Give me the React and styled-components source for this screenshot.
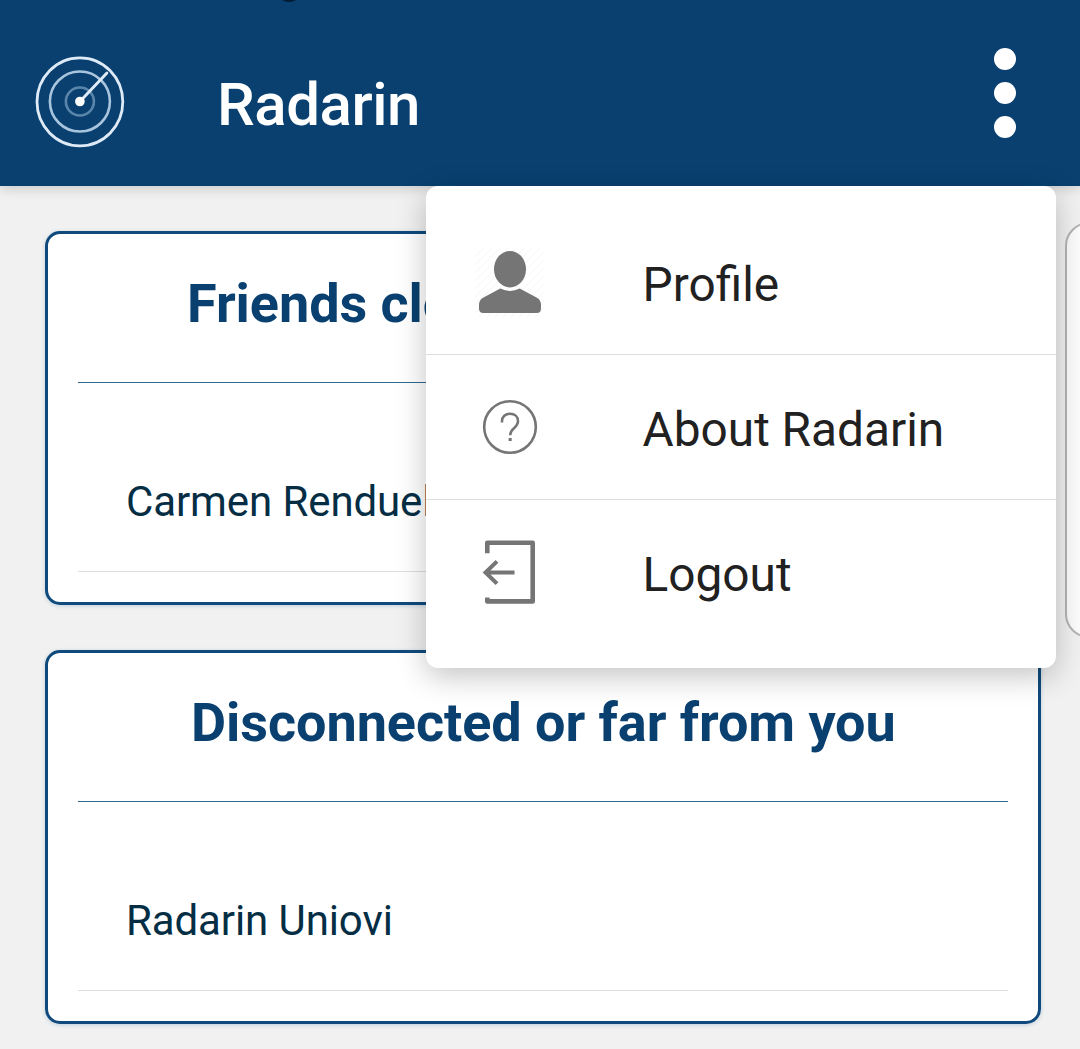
import React from "react";
import styled, { createGlobalStyle } from "styled-components";

const GlobalStyle = createGlobalStyle`
  * { box-sizing: border-box; }
  body {
    margin: 0;
    background: #f1f1f1;
    font-family: Roboto, sans-serif;
    overflow: hidden;
  }
`;

const Screen = styled.div`
  position: relative;
  width: 1080px;
  height: 1049px;
  overflow: hidden;
  background: #f1f1f1;
`;

const AppBar = styled.header`
  position: relative;
  display: flex;
  align-items: center;
  height: 186px;
  padding: 18px 64px 0 34px;
  background: #094070;
  box-shadow: 0 2px 12px rgba(0, 0, 0, 0.18);
`;

const CameraHole = styled.span`
  position: absolute;
  top: -24px;
  left: 276px;
  width: 26px;
  height: 26px;
  border-radius: 50%;
  background: #041c33;
`;

const AppTitle = styled.h1`
  flex: 1;
  margin: 5px 0 0 91px;
  color: #fff;
  font-size: 60px;
  line-height: 70px;
  font-weight: 500;
  letter-spacing: -0.45px;
`;

const MoreButton = styled.button`
  display: flex;
  flex-direction: column;
  gap: 11.5px;
  margin-top: -18px;
  padding: 0;
  border: 0;
  background: none;
`;

const Dot = styled.span`
  width: 22.5px;
  height: 22.5px;
  border-radius: 50%;
  background: #fff;
`;

const Pager = styled.main`
  display: flex;
  align-items: flex-start;
  gap: 24px;
  padding: 36px 0 0 45px;
`;

const Page = styled.section`
  display: flex;
  flex: none;
  flex-direction: column;
  gap: 45px;
  width: 996px;
  padding-top: 9px;
`;

const NextPage = styled.section`
  flex: none;
  width: 300px;
  height: 416px;
  border: 2px solid #b4b4b4;
  border-radius: 24px;
  background: #fcfcfc;
`;

const Card = styled.article`
  height: 374px;
  padding: 0 30px;
  border: 3px solid #104a7c;
  border-radius: 15px;
  background: #fff;
  box-shadow: 0 1px 4px rgba(20, 90, 150, 0.22);
`;

const CardTitle = styled.h2`
  height: 149px;
  margin: 0;
  padding: 38px 0 0 ${(p) => p.$indent}px;
  border-bottom: 1px solid #2e6a90;
  color: #094070;
  font-size: 54px;
  line-height: 64px;
  font-weight: 700;
  letter-spacing: -0.06px;
  white-space: nowrap;
`;

const Friend = styled.div`
  height: 189px;
  padding: 94px 48px 0;
  border-bottom: 1px solid #dedede;
  color: #052e45;
  font-size: 42px;
  line-height: 50px;
  letter-spacing: -0.1px;
`;

const Menu = styled.nav`
  position: absolute;
  top: 186px;
  left: 426px;
  width: 630px;
  height: 482px;
  padding: 24px 0;
  border-radius: 12px;
  background: #fff;
  box-shadow: 0 8px 30px rgba(0, 0, 0, 0.24);
`;

const MenuItem = styled.div`
  display: grid;
  grid-template-columns: 84px 1fr;
  column-gap: 90px;
  align-items: center;
  height: 145px;
  padding-left: 42px;
  border-bottom: ${(p) => (p.$last ? "0" : "1px solid #dedede")};
  color: #212121;
  font-size: 47.8px;
  line-height: 56px;
`;

const MenuLabel = styled.span`
  padding: 5px 0 0 0.5px;
`;

const MenuIcon = styled.svg`
  display: block;
  width: 84px;
  height: 84px;
  color: #757575;
`;

const RadarLogo = () => (
  <svg width="92" height="96" viewBox="0 0 92 96" fill="none" stroke="#deebf7">
    <ellipse cx="45.9" cy="47.8" rx="42.9" ry="44" strokeWidth="2.8" />
    <circle cx="45.9" cy="47.5" r="30" strokeWidth="2.6" stroke="#a9c5de" />
    <circle cx="45.9" cy="47.5" r="14" strokeWidth="2.6" stroke="#5b86ab" />
    <path d="M45.9 47.5 72.9 19" strokeWidth="2.9" strokeLinecap="round" />
    <circle cx="45.9" cy="47.5" r="4.8" fill="#fff" stroke="none" />
  </svg>
);

const ProfileIcon = () => (
  <MenuIcon viewBox="0 0 84 84" fill="currentColor">
    <defs>
      <pattern id="hatch" width="8" height="8" patternUnits="userSpaceOnUse">
        <path d="M-1 9 9 -1M-1 1 1 -1M7 9 9 7" stroke="#f8f8f8" strokeWidth="1.2" />
      </pattern>
    </defs>
    <rect x="7" y="7" width="70" height="70" fill="url(#hatch)" />
    <ellipse cx="42" cy="29.2" rx="16" ry="18.2" />
    <path d="M32.3 48.6Q42 53.4 51.7 48.6L68.5 57.4Q73 59.8 73 65V68.5Q73 73 68.5 73H15.5Q11 73 11 68.5V65Q11 59.8 15.5 57.4Z" />
  </MenuIcon>
);

const HelpIcon = () => (
  <MenuIcon viewBox="0 0 84 84" fill="none" stroke="currentColor">
    <circle cx="42" cy="42" r="25.8" strokeWidth="2.6" />
    <path d="M34 37.4V36C34 31.6 37.4 28.7 42 28.7S50 31.7 50 36.3C50 39.2 48.6 41.1 46 43.2C43.2 45.5 42.2 47.5 42.2 50.2" strokeWidth="2.5" />
    <rect x="40.6" y="53" width="3.1" height="3" fill="currentColor" stroke="none" />
  </MenuIcon>
);

const LogoutIcon = () => (
  <MenuIcon viewBox="0 0 84 84" fill="none" stroke="currentColor">
    <path d="M19.3 22.2V11.7H64.7V70.4H19.3V66.4" strokeWidth="4.6" strokeLinejoin="round" />
    <path d="M46.5 41.5H17.5M29 30.4 17.5 41.5 29 52.6" strokeWidth="4" />
  </MenuIcon>
);

const menuItems = [
  { label: "Profile", Icon: ProfileIcon },
  { label: "About Radarin", Icon: HelpIcon },
  { label: "Logout", Icon: LogoutIcon },
];

const groups = [
  { title: "Friends close to you", friend: "Carmen Rendueles", indent: 109 },
  { title: "Disconnected or far from you", friend: "Radarin Uniovi", indent: 113 },
];

export default function App() {
  return (
    <>
      <GlobalStyle />
      <Screen>
        <AppBar>
          <CameraHole />
          <RadarLogo />
          <AppTitle>Radarin</AppTitle>
          <MoreButton aria-label="More options">
            <Dot />
            <Dot />
            <Dot />
          </MoreButton>
        </AppBar>
        <Pager>
          <Page>
            {groups.map((g) => (
              <Card key={g.title}>
                <CardTitle $indent={g.indent}>{g.title}</CardTitle>
                <Friend>{g.friend}</Friend>
              </Card>
            ))}
          </Page>
          <NextPage />
        </Pager>
        <Menu>
          {menuItems.map(({ label, Icon }, i) => (
            <MenuItem key={label} $last={i === menuItems.length - 1}>
              <Icon />
              <MenuLabel>{label}</MenuLabel>
            </MenuItem>
          ))}
        </Menu>
      </Screen>
    </>
  );
}
